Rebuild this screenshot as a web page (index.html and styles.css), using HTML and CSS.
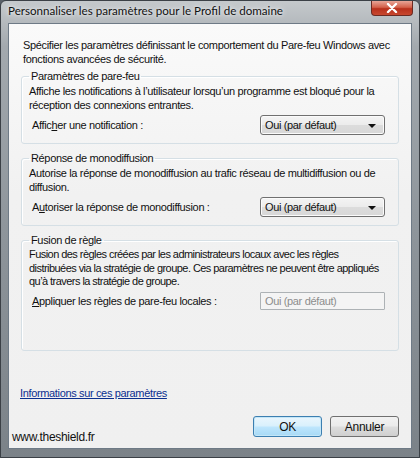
FILE: index.html
```html
<!DOCTYPE html>
<html lang="fr">
<head>
    <meta charset="UTF-8">
    <title>Personnaliser les paramètres pour le Profil de domaine</title>
    <link rel="stylesheet" href="styles.css">
</head>
<body>
    <div class="window">
        <div class="titlebar">
            <span class="title">Personnaliser les paramètres pour le Profil de domaine</span>
            <span class="close">
                <svg width="14" height="10" viewBox="0 0 14 10">
                    <path d="M3 1 L11 9 M11 1 L3 9" stroke="#fff" stroke-width="2.4" stroke-linecap="round"/>
                </svg>
            </span>
        </div>
        <div class="client">
            <p class="intro">Spécifier les paramètres définissant le comportement du Pare-feu Windows avec fonctions avancées de sécurité.</p>

            <fieldset class="group">
                <legend>Paramètres de pare-feu</legend>
                <p class="desc">Affiche les notifications à l’utilisateur lorsqu’un programme est bloqué pour la réception des connexions entrantes.</p>
                <div class="row">
                    <span class="label">Affic<u>h</u>er une notification :</span>
                    <div class="combo">Oui (par défaut)<span class="arrow"></span></div>
                </div>
            </fieldset>

            <fieldset class="group">
                <legend>Réponse de monodiffusion</legend>
                <p class="desc">Autorise la réponse de monodiffusion au trafic réseau de multidiffusion ou de diffusion.</p>
                <div class="row">
                    <span class="label">A<u>u</u>toriser la réponse de monodiffusion :</span>
                    <div class="combo">Oui (par défaut)<span class="arrow"></span></div>
                </div>
            </fieldset>

            <fieldset class="group tall">
                <legend>Fusion de règle</legend>
                <p class="desc">Fusion des règles créées par les administrateurs locaux avec les règles<br>
                    distribuées via la stratégie de groupe. Ces paramètres ne peuvent être appliqués<br>
                    qu’à travers la stratégie de groupe.</p>
                <div class="row">
                    <span class="label"><u>A</u>ppliquer les règles de pare-feu locales :</span>
                    <div class="combo disabled">Oui (par défaut)</div>
                </div>
            </fieldset>

            <a class="info" href="#">Informations sur ces paramètres</a>

            <div class="footer">
                <span class="site">www.theshield.fr</span>
                <div class="buttons">
                    <button class="btn default">OK</button>
                    <button class="btn">Annuler</button>
                </div>
            </div>
        </div>
    </div>
</body>
</html>
```

FILE: styles.css
```css
body {
    margin: 0;
    padding: 0;
    background: #5a6068;
}

.window {
    width: 420px;
    height: 458px;
    box-sizing: border-box;
    padding: 0 7px 8px 7px;
    background: linear-gradient(to bottom, #c5c9cc 0%, #a3a9ae 10%, #8e959b 50%, #7b8288 100%);
    border: 1px solid #3b4046;
    border-radius: 6px 6px 0 0;
    display: flex;
    flex-direction: column;
}

.titlebar {
    height: 22px;
    display: flex;
    justify-content: space-between;
    align-items: flex-start;
}

.title {
    font-family: Lato, "Noto Sans", sans-serif;
    font-size: 11.6px;
    color: #111;
    margin-top: 3px;
    text-shadow: 0 0 6px #eef0f2, 0 0 3px #eef0f2;
}

.close {
    width: 40px;
    height: 14px;
    margin-right: -1px;
    border: 1px solid #6b2a22;
    border-top: none;
    border-radius: 0 0 4px 4px;
    background: linear-gradient(to bottom, #e8a597 0%, #d4614b 45%, #b8301c 55%, #c8482f 100%);
    display: flex;
    align-items: center;
    justify-content: center;
}

.client {
    flex: 1;
    background: linear-gradient(to bottom, #fafafa 0%, #f1f1f1 40%, #f0f0f0 100%);
    border: 1px solid #6e7a86;
    padding: 0 12px 11px 12px;
    font-family: "Liberation Sans", Arial, sans-serif;
    font-size: 11px;
    letter-spacing: -0.35px;
    color: #111;
    display: flex;
    flex-direction: column;
}

.intro {
    margin: 14px 0 4px 2px;
    line-height: 14px;
}

.group {
    border: 1px solid #d5dfe5;
    border-radius: 3px;
    margin: 0 0 8px 0;
    padding: 0 5px 8px 7px;
    box-shadow: inset 1px 1px 0 #fff;
}

.group legend {
    padding: 0 2px;
    margin-left: 0;
    line-height: 12px;
}

.desc {
    margin: 2px 0 3px 0;
    line-height: 14px;
}

.row {
    display: flex;
    align-items: center;
    justify-content: space-between;
    padding-left: 3px;
    padding-right: 8px;
}

.combo {
    width: 119px;
    height: 18px;
    border: 1px solid #707070;
    border-radius: 3px;
    background: linear-gradient(to bottom, #f4f4f4 0%, #ececec 48%, #dcdcdc 52%, #d8d8d8 100%);
    box-shadow: inset 0 0 0 1px #fbfbfb;
    line-height: 18px;
    padding-left: 4px;
    position: relative;
    color: #111;
}

.arrow {
    position: absolute;
    right: 8px;
    top: 8px;
    border-left: 4px solid transparent;
    border-right: 4px solid transparent;
    border-top: 4px solid #111;
}

.combo.disabled {
    height: 16px;
    line-height: 16px;
    background: #f4f4f4;
    border-color: #adb2b5;
    box-shadow: none;
    color: #8d8d8d;
    border-radius: 1px;
}

.tall .desc {
    line-height: 13.5px;
    letter-spacing: -0.55px;
    margin-right: -3px;
    white-space: nowrap;
}

.tall {
    padding-bottom: 40px;
}

.info {
    color: #0b2f8f;
    margin: 28px 0 0 -1px;
    align-self: flex-start;
}

.footer {
    display: flex;
    justify-content: space-between;
    align-items: flex-end;
    margin-top: auto;
}

.site {
    font-family: "Liberation Sans", Arial, sans-serif;
    font-size: 12px;
    letter-spacing: -0.3px;
    color: #111;
    margin-left: -9px;
    margin-bottom: -7px;
}

.buttons {
    display: flex;
    gap: 8px;
}

.btn {
    width: 69px;
    height: 21px;
    border: 1px solid #707070;
    border-radius: 3px;
    background: linear-gradient(to bottom, #f2f2f2 0%, #ebebeb 48%, #dddddd 52%, #cfcfcf 100%);
    font-family: "Liberation Sans", Arial, sans-serif;
    font-size: 12px;
    letter-spacing: -0.3px;
    color: #111;
    padding: 0;
}

.btn.default {
    border-color: #3c7fb1;
    background: linear-gradient(to bottom, #eaf6fd 0%, #d9f0fc 48%, #bee6fd 52%, #a7d9f5 100%);
    box-shadow: inset 0 0 0 1px #c4e6f7;
}
```
